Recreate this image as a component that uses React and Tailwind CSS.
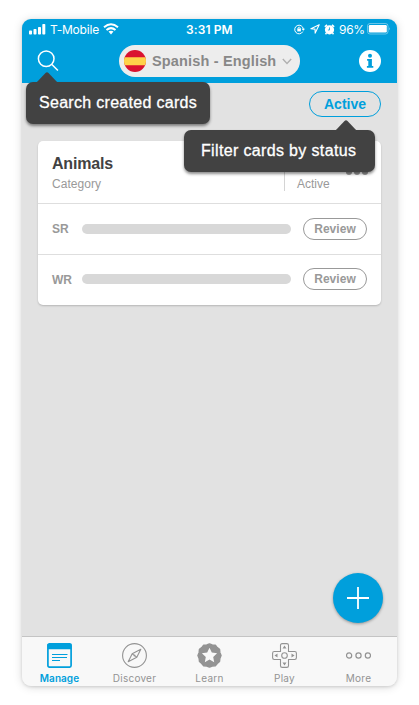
function StatusBar() {
  return (
    <div className="relative flex h-5 items-center justify-between pl-[7px] pr-[7px] font-['Inter',sans-serif] text-[12px] leading-5 text-white">
      <div className="flex items-center">
        <svg width="17" height="11" viewBox="0 0 17 11" fill="currentColor">
          <rect x="0" y="6.5" width="3" height="4" rx=".8" />
          <rect x="4.5" y="5" width="3" height="5.5" rx=".8" />
          <rect x="9" y="3" width="3" height="7.5" rx=".8" />
          <rect x="13.3" y="0" width="3" height="10.5" rx=".8" />
        </svg>
        <span className="ml-[4px] mt-[2px] w-[50px] whitespace-nowrap text-[12px] tracking-[-0.2px]">T-Mobile</span>
        <svg className="ml-[3px]" width="16" height="12" viewBox="0 0 16 12" fill="none" stroke="currentColor" strokeWidth="2">
          <path d="M1 4.2Q8-1.8 15 4.2M3.5 7Q8 3.2 12.5 7" />
          <path d="M5.5 8.6Q8 6.8 10.5 8.6L8 11.4Z" fill="currentColor" stroke="none" />
        </svg>
      </div>
      <span className="absolute left-[164px] top-[1px] whitespace-nowrap text-[12px] font-semibold tracking-[0.1px]">3:31 PM</span>
      <div className="flex items-center">
        <svg width="11" height="11" viewBox="0 0 11 11" fill="none" stroke="currentColor">
          <path d="M8.8 7.6A4.3 4.3 0 1 1 9.3 5" />
          <path d="M7.6 4.8H11L9.3 6.8Z" fill="currentColor" stroke="none" />
          <rect x="3.3" y="4.6" width="3.6" height="2.8" fill="currentColor" stroke="none" />
          <path d="M4 5V3.8Q5.1 2.2 6.2 3.8V5" strokeWidth=".8" />
        </svg>
        <svg className="ml-[5px]" width="10" height="10" viewBox="0 0 10 10" fill="none" stroke="currentColor" strokeWidth="1.1" strokeLinejoin="round">
          <path d="M9.2.8.9 4.8 5 5.1 5.2 9.1Z" />
        </svg>
        <svg className="ml-[4px]" width="11" height="11" viewBox="0 0 11 11">
          <circle cx="5.5" cy="5.8" r="4.6" fill="white" />
          <path d="M.8 2.8 3 .9M10.2 2.8 8 .9M2.5 9 1.5 10.2M8.5 9l1 1.2" stroke="white" strokeWidth="1.5" />
          <path d="M5.5 3.4V6H3.9" fill="none" stroke="#009fdc" strokeWidth=".8" />
        </svg>
        <span className="ml-1 mt-[2px] w-[26px] whitespace-nowrap text-[12px] tracking-[-0.3px]">96%</span>
        <svg className="ml-[2px]" width="23" height="12" viewBox="0 0 23 12">
          <rect x=".5" y=".5" width="20.5" height="10.5" rx="2.5" fill="none" stroke="white" strokeOpacity=".4" />
          <rect x="1.8" y="2" width="18" height="7.5" rx="1.2" fill="white" />
          <path d="M22 4.3q1.3 1.5 0 3Z" fill="white" fillOpacity=".6" />
        </svg>
      </div>
    </div>
  );
}

function NavBar() {
  return (
    <div className="flex h-11 items-center pl-[15px] pr-4">
      <svg width="23" height="22" viewBox="0 0 23 22" fill="none" stroke="white" strokeWidth="1.5">
        <circle cx="9.2" cy="8.8" r="7.8" />
        <path d="m14.9 14.5 6 6" />
      </svg>
      <div className="ml-[59px] flex h-8 w-[181px] items-center rounded-full bg-[#ededed] pl-[5px] text-[#888]">
        <svg width="22" height="22" viewBox="0 0 22 22">
          <clipPath id="flag"><circle cx="11" cy="11" r="11" /></clipPath>
          <g clipPath="url(#flag)">
            <path fill="#da1230" d="M0 0h22v22H0z" />
            <path fill="#ffd24a" d="M0 7.3h22v8H0z" />
          </g>
        </svg>
        <span className="ml-[6px] mt-[2px] w-[125px] whitespace-nowrap text-[14.5px] font-bold tracking-[0.16px]">Spanish - English</span>
        <svg className="ml-[5px]" width="10" height="7" viewBox="0 0 10 7" fill="none" stroke="#b0b0b0" strokeWidth="1.4">
          <path d="m.8 1 4.2 4.4L9.2 1" />
        </svg>
      </div>
      <svg className="ml-auto" width="22" height="22" viewBox="0 0 22 22">
        <circle cx="11" cy="11" r="11" fill="white" />
        <circle cx="11" cy="5.7" r="2" fill="#009fdc" />
        <path d="M8.1 9h4.8v7h1.4v1.8H7.9V16h1.4v-5.2H8.1Z" fill="#009fdc" />
      </svg>
    </div>
  );
}

function Row({ label }) {
  return (
    <div className="flex h-[50.5px] items-center border-t border-[#dedede] pl-[14px] pr-[14px]">
      <span className="mt-px w-[30px] text-[12px] font-bold text-[#999]">{label}</span>
      <div className="h-[10px] w-[209px] rounded-full bg-[#d8d8d8]" />
      <button className="ml-3 h-[22px] w-16 rounded-full border border-[#999] text-[12px] font-bold leading-5 tracking-[0.05px] text-[#999]">Review</button>
    </div>
  );
}

function Card() {
  return (
    <div className="mx-4 mt-6 h-[164px] overflow-hidden rounded-[5px] bg-white shadow-[0_1px_2px_rgba(0,0,0,0.2)]">
      <div className="flex h-[62px] justify-between pl-[14px] pr-[13px] pt-[14px]">
        <div>
          <div className="text-[16px] font-bold leading-[18px] tracking-[-0.2px] text-[#424242]">Animals</div>
          <div className="mt-[3px] text-[12px] leading-4 tracking-[0.05px] text-[#999]">Category</div>
        </div>
        <div className="flex h-9 w-[84px] flex-col border-l border-[#d4d4d4] pl-3">
          <div className="flex h-[20px] shrink-0 items-end justify-end gap-[2px]">
            <i className="size-[6px] rounded-full bg-[#999]" />
            <i className="size-[6px] rounded-full bg-[#999]" />
            <i className="size-[6px] rounded-full bg-[#999]" />
          </div>
          <span className="mt-px text-[12px] leading-4 text-[#999]">Active</span>
        </div>
      </div>
      <Row label="SR" />
      <Row label="WR" />
    </div>
  );
}

const tabs = [
  {
    name: "Manage",
    icon: (
      <>
        <rect x=".9" y=".9" width="23.2" height="23.2" rx="1.5" fill="none" stroke="currentColor" strokeWidth="1.7" />
        <path d="M.5 1h24v5.2H.5z" fill="currentColor" />
        <path d="M5 11.5h15.5M5 14.5h15M5 17.5h8" stroke="currentColor" strokeWidth="1.1" />
      </>
    ),
  },
  {
    name: "Discover",
    icon: (
      <g fill="none" stroke="currentColor" strokeWidth="1.1" strokeLinejoin="round">
        <circle cx="12.5" cy="12.5" r="11.9" />
        <path d="m18.8 6.2-8.6 4.5-4 8.1 8.6-4.5ZM10.2 10.7l1.7 1.4M14.8 14.3l-1.7-1.4" />
        <circle cx="12.5" cy="12.5" r="1" fill="currentColor" stroke="none" />
      </g>
    ),
  },
  {
    name: "Learn",
    icon: (
      <>
        <path d="M12.5.9 15.2 2l3.1.2 1.9 2.4 2.3 1.8.3 3 1.2 3.1-1.2 3-.3 3-2.3 1.9-1.9 2.3-3.1.3-2.7 1.1-2.7-1.1-3.1-.3-1.9-2.3-2.3-1.9-.3-3L1 12.5l1.2-3.1.3-3 2.3-1.8 1.9-2.4L9.8 2Z" fill="currentColor" stroke="currentColor" strokeWidth="1.5" strokeLinejoin="round" />
        <path d="m12.5 4.7 2.3 4.9 5.3.7-3.9 3.6 1 5.3-4.7-2.6-4.7 2.6 1-5.3-3.9-3.6 5.3-.7Z" fill="#f8f8f8" />
      </>
    ),
  },
  {
    name: "Play",
    icon: (
      <>
        <path d="M10.2.6h4.6q1.7 0 1.7 1.7V8.5h6.2q1.7 0 1.7 1.7v4.6q0 1.7-1.7 1.7h-6.2v6.2q0 1.7-1.7 1.7h-4.6q-1.7 0-1.7-1.7v-6.2H2.3q-1.7 0-1.7-1.7v-4.6q0-1.7 1.7-1.7h6.2V2.3Q8.5.6 10.2.6Z" fill="none" stroke="currentColor" strokeWidth="1.1" />
        <circle cx="12.5" cy="12.5" r="2.8" fill="none" stroke="currentColor" strokeWidth="1.1" />
        <path d="m12.5 2.5 2 3h-4ZM12.5 22.5l2-3h-4ZM2.5 12.5l3-2v4ZM22.5 12.5l-3-2v4Z" fill="currentColor" />
      </>
    ),
  },
  {
    name: "More",
    icon: (
      <g fill="none" stroke="currentColor" strokeWidth="1.2">
        <circle cx="3.1" cy="12.5" r="2.6" />
        <circle cx="12.5" cy="12.5" r="2.6" />
        <circle cx="21.9" cy="12.5" r="2.6" />
      </g>
    ),
  },
];

function TabBar() {
  return (
    <nav className="grid h-[50px] grid-cols-5 border-t border-[#c4c4c4] bg-[#f8f8f8] font-['Inter',sans-serif]">
      {tabs.map((tab, i) => (
        <div key={tab.name} className={i === 0 ? "flex flex-col items-center pt-[6px] font-semibold text-[#009fdc]" : "flex flex-col items-center pt-[6px] text-[#939393] last:pr-[2px]"}>
          <svg width="25" height="25" viewBox="0 0 25 25">{tab.icon}</svg>
          <span className={i === 0 ? "mt-[4px] text-[10px] leading-3 tracking-[0.05px]" : "mt-[4px] text-[10px] leading-3 tracking-[0.25px]"}>{tab.name}</span>
        </div>
      ))}
    </nav>
  );
}

export default function App() {
  return (
    <div className="h-[705px] w-[419px] overflow-hidden bg-white pl-[22px] pt-[19px] font-['Liberation_Sans',Arial,sans-serif]">
      <div className="relative h-[667px] w-[375px] rounded-[9px] shadow-[0_1px_3px_rgba(0,0,0,0.12),0_1px_10px_rgba(0,0,0,0.15)]">
        <div className="flex h-full flex-col overflow-hidden rounded-[9px] bg-[#e2e2e2]">
          <header className="h-16 bg-[#009fdc]">
            <StatusBar />
            <NavBar />
          </header>
          <main className="flex-1">
            <div className="flex justify-end pr-4 pt-2">
              <button className="h-[26px] w-[72px] rounded-full border border-[#009fdc] text-[14px] font-bold leading-6 text-[#009fdc]">Active</button>
            </div>
            <Card />
          </main>
          <TabBar />
        </div>

        <div className="absolute left-[4px] top-[63px] flex h-[42px] w-[184px] items-center rounded-[7px] bg-[#424242] pl-[13px] text-[16px] tracking-[0.3px] text-white shadow-[0_2px_3px_rgba(0,0,0,0.45)] [-webkit-text-stroke:0.3px_white]">
          <svg className="absolute -top-[10px] left-[10px]" width="22" height="11"><path d="M0 11 9.5 1q1.5-1.4 3 0L22 11Z" fill="#424242" /></svg>
          <span className="whitespace-nowrap">Search created cards</span>
        </div>
        <div className="absolute left-[162px] top-[111px] flex h-[42px] w-[191px] items-center rounded-[7px] bg-[#424242] pl-[17px] text-[16px] tracking-[0.35px] text-white shadow-[0_2px_3px_rgba(0,0,0,0.45)] [-webkit-text-stroke:0.3px_white]">
          <svg className="absolute -top-[10px] left-[151px]" width="22" height="11"><path d="M0 11 9.5 1q1.5-1.4 3 0L22 11Z" fill="#424242" /></svg>
          <span className="whitespace-nowrap">Filter cards by status</span>
        </div>

        <button className="absolute left-[311px] top-[554px] flex size-[50px] items-center justify-center rounded-full bg-[#009fdc] shadow-[0_1px_3px_rgba(0,0,0,0.35)]">
          <svg width="22" height="22" viewBox="0 0 22 22" stroke="white" strokeWidth="1.8"><path d="M0 11h22M11 0v22" /></svg>
        </button>
      </div>
    </div>
  );
}
